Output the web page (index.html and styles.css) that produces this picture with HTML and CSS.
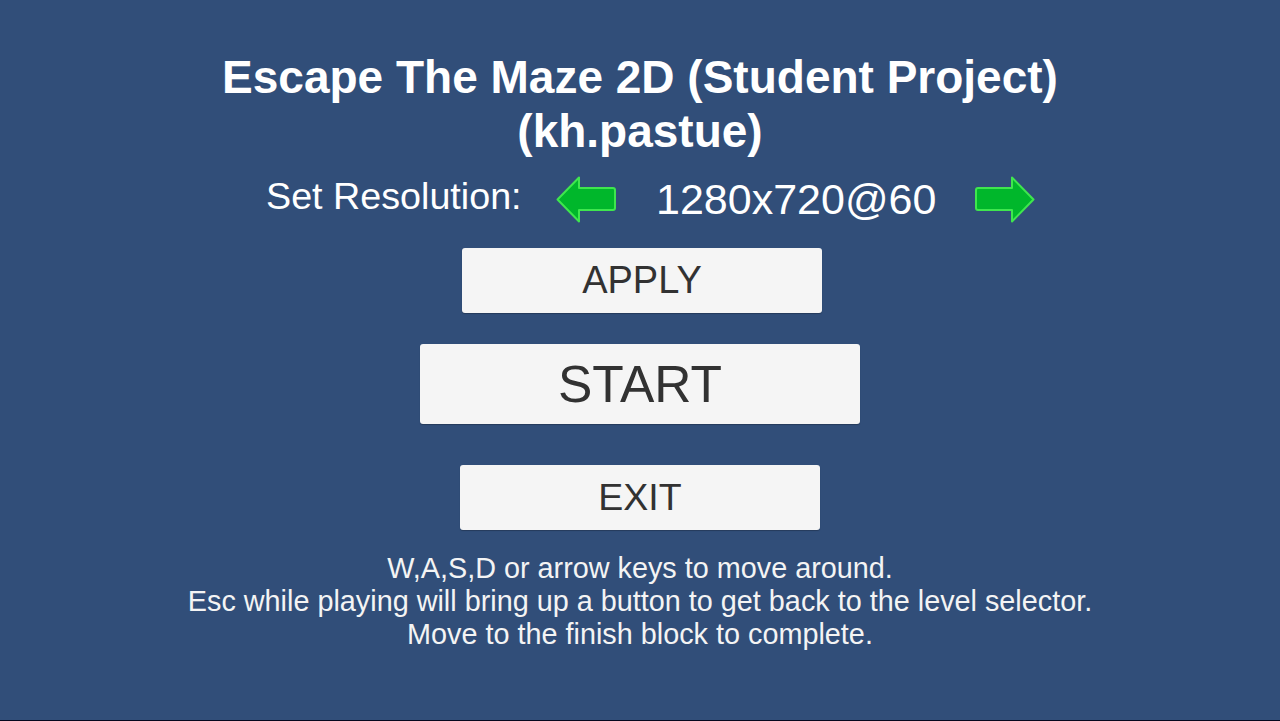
FILE: index.html
```html
<!DOCTYPE html>
<html>
<head>
<meta charset="utf-8">
<link rel="stylesheet" href="styles.css">
</head>
<body>
<main class="screen">
  <h1 class="title">Escape The Maze 2D (Student Project)<br>(kh.pastue)</h1>
  <div class="res-row">
    <span class="res-label">Set Resolution:</span>
    <svg class="arrow" viewBox="0 0 60 47" width="60" height="47">
      <path d="M1.5 23.5 L23 1.5 L23 12 L57 12 Q59 12 59 14 L59 32 Q59 34 57 34 L23 34 L23 45.5 Z" fill="#00b72b" stroke="#3fe64e" stroke-width="2" stroke-linejoin="round"/>
    </svg>
    <span class="res-value">1280x720@60</span>
    <svg class="arrow" viewBox="0 0 60 47" width="60" height="47">
      <path d="M58.5 23.5 L37 1.5 L37 12 L3 12 Q1 12 1 14 L1 32 Q1 34 3 34 L37 34 L37 45.5 Z" fill="#00b72b" stroke="#3fe64e" stroke-width="2" stroke-linejoin="round"/>
    </svg>
  </div>
  <button class="btn btn-apply">APPLY</button>
  <button class="btn btn-start">START</button>
  <button class="btn btn-exit">EXIT</button>
  <p class="help">W,A,S,D or arrow keys to move around.<br>Esc while playing will bring up a button to get back to the level selector.<br>Move to the finish block to complete.</p>
</main>
</body>
</html>
```
FILE: styles.css
```css
html, body {
  margin: 0;
  padding: 0;
  background: #05081e;
  overflow: hidden;
}
.screen {
  height: 720px;
  background: #314e79;
  display: flex;
  flex-direction: column;
  align-items: center;
  font-family: "Liberation Sans", Arial, sans-serif;
  color: #fff;
}
.title {
  margin: 50px 0 0;
  font-size: 46px;
  line-height: 54px;
  font-weight: bold;
  text-align: center;
  white-space: nowrap;
}
.res-row {
  margin-top: 18px;
  height: 47px;
  display: flex;
  align-items: center;
  padding-left: 21px;
}
.res-label {
  font-size: 37.7px;
  width: 256px;
  margin-right: 34px;
  padding-bottom: 7px;
  white-space: nowrap;
}
.arrow {
  display: block;
}
.res-value {
  font-size: 43px;
  width: 280px;
  margin: 0 39px 0 40px;
  text-align: center;
  white-space: nowrap;
}
.btn {
  display: block;
  border: none;
  background: #f5f5f5;
  border-radius: 3px;
  box-shadow: 0 1px 1px rgba(0, 0, 0, 0.25);
  color: #323232;
  font-family: "Liberation Sans", Arial, sans-serif;
  padding: 0;
}
.btn-apply {
  margin-top: 25px;
  margin-left: 4px;
  width: 360px;
  height: 65px;
  font-size: 38px;
}
.btn-start {
  margin-top: 31px;
  width: 440px;
  height: 80px;
  font-size: 51.5px;
}
.btn-exit {
  margin-top: 41px;
  width: 360px;
  height: 65px;
  font-size: 37.5px;
}
.help {
  margin: 22px 0 0;
  font-size: 28.8px;
  line-height: 33px;
  text-align: center;
  color: #f4f4f4;
}
```
